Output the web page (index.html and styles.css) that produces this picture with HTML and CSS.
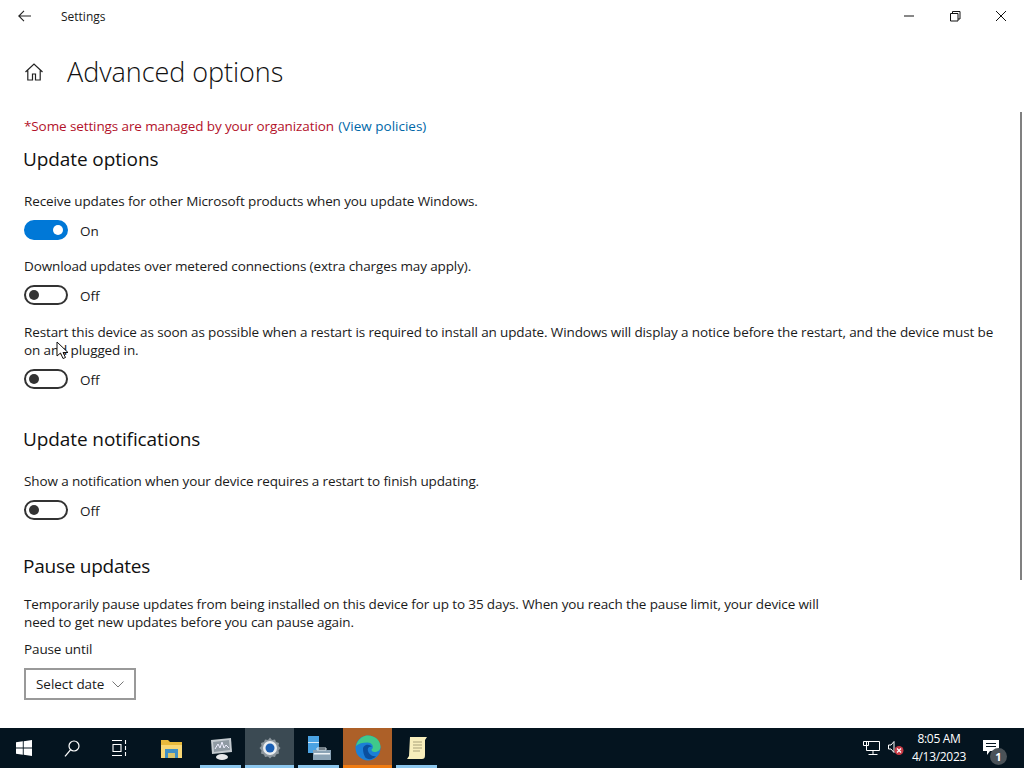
FILE: index.html
```html
<!DOCTYPE html>
<html lang="en">
<head>
<meta charset="utf-8">
<title>Settings</title>
<link rel="stylesheet" href="styles.css">
</head>
<body>
<div class="window">
  <header class="titlebar">
    <svg class="back" width="13" height="12" viewBox="0 0 13 12"><path d="M6 .8.8 6 6 11.200M.8 6H13" fill="none" stroke="#222" stroke-width="1.100"/></svg>
    <span class="app-name">Settings</span>
    <div class="controls">
      <svg class="ctl" width="46" height="32" viewBox="0 0 46 32"><path d="M18 16h10" stroke="#111" stroke-width="1"/></svg>
      <svg class="ctl" width="46" height="32" viewBox="0 0 46 32"><path d="M18.500 13.500h7.500v7.500h-7.500zM20.500 13.500v-2h7.500v7.500h-2" fill="none" stroke="#111" stroke-width="1"/></svg>
      <svg class="ctl" width="46" height="32" viewBox="0 0 46 32"><path d="m18 11 10 10M28 11 18 21" stroke="#111" stroke-width="1"/></svg>
    </div>
  </header>
  <main class="content">
    <div class="page-head">
      <svg class="home" width="20" height="20" viewBox="0 0 20 20"><path d="M1.500 10 10 2l8.500 8M3.800 8.500V18h4.700v-6h3v6h4.700V8.500" fill="none" stroke="#222" stroke-width="1.200"/></svg>
      <h1>Advanced options</h1>
    </div>
    <p class="policy"><span class="managed">*Some settings are managed by your organization</span> <a class="link">(View policies)</a></p>
    <h2 class="first">Update options</h2>
    <p class="label">Receive updates for other Microsoft products when you update Windows.</p>
    <div class="toggle-row first-row"><span class="toggle on"></span><span class="state">On</span></div>
    <p class="label gap">Download updates over metered connections (extra charges may apply).</p>
    <div class="toggle-row"><span class="toggle"></span><span class="state">Off</span></div>
    <p class="label gap wide-gap">Restart this device as soon as possible when a restart is required to install an update. Windows will display a notice before the restart, and the device must be on and plugged in.</p>
    <div class="toggle-row"><span class="toggle"></span><span class="state">Off</span></div>
    <h2 class="notif">Update notifications</h2>
    <p class="label">Show a notification when your device requires a restart to finish updating.</p>
    <div class="toggle-row"><span class="toggle"></span><span class="state">Off</span></div>
    <h2 class="pause">Pause updates</h2>
    <p class="label narrow">Temporarily pause updates from being installed on this device for up to 35 days. When you reach the pause limit, your device will need to get new updates before you can pause again.</p>
    <p class="label until">Pause until</p>
    <div class="select"><span>Select date</span><svg width="12" height="7" viewBox="0 0 12 7"><path d="m.5.500 5.500 5.500L11.500.5" fill="none" stroke="#777" stroke-width="1"/></svg></div>
    <div class="scrollthumb"></div>
    <svg class="cursor" width="13" height="19" viewBox="0 0 13 19"><path d="M1 1v14l3.500-3 2.500 5.500 2.500-1-2.500-5H12z" fill="#fff" stroke="#111" stroke-width="1"/></svg>
  </main>
  <footer class="taskbar">
    <div class="tb narrow-tb"><svg width="16" height="16" viewBox="0 0 16 16"><path d="M0 2.300 6.800 1.300v6.300H0zM7.700 1.200 16 0v7.600H7.700zM0 8.400h6.800v6.300L0 13.700zM7.700 8.400H16V16l-8.300-1.200z" fill="#fff"/></svg></div>
    <div class="tb narrow-tb"><svg width="16" height="17" viewBox="0 0 16 17"><circle cx="10" cy="6" r="5" fill="none" stroke="#fff" stroke-width="1.200"/><path d="m6.500 9.800-5.500 6.500" stroke="#fff" stroke-width="1.300"/></svg></div>
    <div class="tb narrow-tb"><svg width="17" height="16" viewBox="0 0 17 16"><path d="M0 .5h10M0 15.500h10M1 4.500h8v7H1zM13.500 0v4M13.500 6v4M13.500 12v4" fill="none" stroke="#fff" stroke-width="1.100"/></svg></div>
    <div class="tb explorer"><svg width="21" height="19" viewBox="0 0 21 19"><path d="M0 1h7l2 2h12v16H0z" fill="#e8b93c"/><path d="M0 6h21v13H0z" fill="#f8d775"/><path d="M4 10h13v9H4z" fill="#3f8fc4"/><path d="M7 14h7v5H7z" fill="#d9c46a"/></svg></div>
    <div class="tb active"><svg width="24" height="24" viewBox="0 0 24 24"><path d="m2 4 20-2 1 14-20 2z" fill="#c4cbd0"/><path d="m4 6 16-2 1 10-16 2z" fill="#8f9aa3"/><path d="m6 13 3-5 2 4 2-6 2 6 2-3 3 3" fill="none" stroke="#eef" stroke-width="1"/><ellipse cx="13" cy="21" rx="6" ry="3" fill="#e6e8ea"/></svg></div>
    <div class="tb active current"><svg width="24" height="24" viewBox="0 0 24 24"><path d="M12 1.500 14 4l3-.5 1 2.500 3 1-.5 3 2 2-2 2.500.5 3-3 1-1 2.500-3-.5-2 2-2-2-3 .5-1-2.500-3-1 .5-3-2-2.500 2-2-.5-3 3-1 1-2.500 3 .5z" fill="#8d979e"/><circle cx="12" cy="12" r="7" fill="#e9edf0"/><circle cx="12" cy="12" r="4.500" fill="#1a5fb4"/></svg></div>
    <div class="tb active"><svg width="24" height="26" viewBox="0 0 24 26"><path d="M1 1h11v17H1z" fill="#4ba3e3"/><path d="M1 7h11v1H1z" fill="#d7ecfa"/><path d="M6 15h18v10H6z" fill="#8ba3b5"/><path d="M10 13h9v2h-9z" fill="none" stroke="#dfe7ec"/><path d="M7 18h16v1.500H7z" fill="#eef3f6"/></svg></div>
    <div class="tb edge"><svg width="26" height="26" viewBox="0 0 26 26"><circle cx="13" cy="13" r="12.500" fill="#1b7fd6"/><path d="M1 11C3 3 9 .5 13 .5c7 0 12.500 5 12.500 11.500 0 3-3 5-6 5-2 0-3-1-3-2.500 3-2 1-7-4-7-5 0-9 1-11.500 3.500z" fill="#3fc98b"/><path d="M8 14c0-4 6-6 9-2-3-1-5 1-4 4s4 6 8 5c-3 4-9 4-11 1-1-2-2-5-2-8z" fill="#0a4f9e"/></svg></div>
    <div class="tb active"><svg width="22" height="24" viewBox="0 0 22 24"><path d="M4 1h17l-2 3v15c0 3-1 4-3 4H1l2-3z" fill="#f7eebc"/><path d="M7 6h9M7 9h9M7 12h9M7 15h7" stroke="#a9a27a" stroke-width="1"/></svg></div>
    <div class="tray">
      <svg width="17" height="14" viewBox="0 0 17 14"><path d="M3.500.5h13v9h-13zM10 9.500v3.500M5.500 13.500h9M.5.5h5v4h-5z" fill="#04141f" stroke="#fff" stroke-width="1"/></svg>
      <svg class="spk" width="16" height="16" viewBox="0 0 16 16"><path d="M.5 5h2.500l3-3.500v11L3 9H.5z" fill="none" stroke="#fff" stroke-width="1"/><circle cx="11" cy="10.500" r="4.500" fill="#c93a45"/><path d="m9 8.500 4 4M13 8.500l-4 4" stroke="#fff" stroke-width="1.200"/></svg>
      <div class="clock"><span>8:05 AM</span><span>4/13/2023</span></div>
      <div class="notif-icon">
        <svg width="16" height="16" viewBox="0 0 16 16"><path d="M0 0h16v11H7l-3 4v-4H0z" fill="#fff"/><path d="M3 3.500h10M3 6.500h10" stroke="#04141f"/></svg>
        <span class="count">1</span>
      </div>
    </div>
  </footer>
</div>
</body>
</html>
```
FILE: styles.css
```css
* { box-sizing: border-box; }
html, body { margin: 0; height: 100%; overflow: hidden; }
body { font-family: "Open Sans", "Noto Sans", sans-serif; color: #1a1a1a; background: #fff; }
.window { display: flex; flex-direction: column; height: 768px; }
p, h1, h2 { margin: 0; font-weight: 400; }

.titlebar { display: flex; align-items: center; height: 32px; flex: none; padding-left: 18px; }
.back { flex: none; }
.app-name { margin: 2px 0 0 30px; font-size: 12px; line-height: 16px; }
.controls { display: flex; margin-left: auto; }
.ctl { display: block; }

.content { position: relative; flex: 1; min-height: 0; overflow: hidden; padding-left: 24px; }
.page-head { display: flex; align-items: center; height: 40px; margin-top: 20px; }
.home { flex: none; }
h1 { margin-left: 23px; font-size: 27px; line-height: 40px; height: 40px; letter-spacing: -0.05px; font-weight: 300; color: #111; }
.policy { margin-top: 25px; font-size: 13.500px; line-height: 18px; letter-spacing: -0.11px; }
.managed { color: #b3122a; }
.link { margin-left: 1px; letter-spacing: 0; color: #0067a8; }
h2 { margin-left: -1px; font-size: 19px; line-height: 26px; letter-spacing: -0.1px; color: #111; }
h2.first { margin-top: 11px; }
h2.notif { margin-top: 37px; }
h2.pause { margin-top: 33px; letter-spacing: -0.25px; }
.label { margin-top: 20px; font-size: 13.500px; line-height: 18px; letter-spacing: -0.12px; width: 975px; }
.label.gap { margin-top: 16px; }
.label.wide-gap { margin-top: 18px; }
.label.narrow { width: 810px; margin-top: 16px; }
.label.until { margin-top: 9px; }
.toggle-row { display: flex; align-items: center; gap: 12px; height: 20px; margin-top: 10px; font-size: 13.500px; }
.toggle-row.first-row { height: 21px; padding-bottom: 1px; }
.state { padding-top: 2px; }
.toggle { position: relative; display: block; width: 44px; height: 20px; border: 2px solid #333; border-radius: 10px; }
.toggle::after { content: ""; position: absolute; left: 3px; top: 3px; width: 10px; height: 10px; border-radius: 50%; background: #333; }
.toggle.on { background: #0078d7; border-color: #0078d7; }
.toggle.on::after { left: auto; right: 3px; background: #fff; }
.select { display: flex; align-items: center; justify-content: space-between; width: 112px; height: 32px; margin-top: 10px; padding: 0 10px; border: 2px solid #999; font-size: 13.500px; letter-spacing: -0.05px; }
.scrollthumb { position: absolute; right: 2px; top: 80px; width: 2px; height: 468px; background: #808080; }
.cursor { position: absolute; left: 56px; top: 309px; }

.taskbar { display: flex; align-items: stretch; flex: none; height: 40px; background: #04141f; color: #fff; }
.tb { position: relative; display: flex; align-items: center; justify-content: center; width: 49px; height: 40px; }
.tb.narrow-tb { width: 48px; }
.tb.explorer { margin-left: 3px; }
.tb.active::after { content: ""; position: absolute; left: 4px; right: 4px; bottom: 0; height: 3px; background: #8cc7ee; }
.tb.current { background: #3b4a53; }
.tb.current::after { left: 0; right: 0; }
.tb.edge { background: #ad6028; }
.tb.edge::after { content: ""; position: absolute; left: 0; right: 0; bottom: 0; height: 3px; background: #f07c12; }
.tray { display: flex; align-items: center; margin-left: auto; }
.tray .spk { margin-left: 8px; }
.clock { display: flex; flex-direction: column; align-items: center; width: 60px; margin-left: 5px; font-size: 12px; line-height: 18px; letter-spacing: -0.3px; }
.notif-icon { position: relative; align-self: stretch; width: 48px; height: 40px; margin-left: 7px; padding: 12px 0 0 7px; }
.notif-icon svg { display: block; }
.count { position: absolute; left: 14px; top: 20px; width: 17px; height: 17px; border-radius: 50%; background: #4a5258; font-size: 11px; font-weight: 700; line-height: 17px; text-align: center; }
```
